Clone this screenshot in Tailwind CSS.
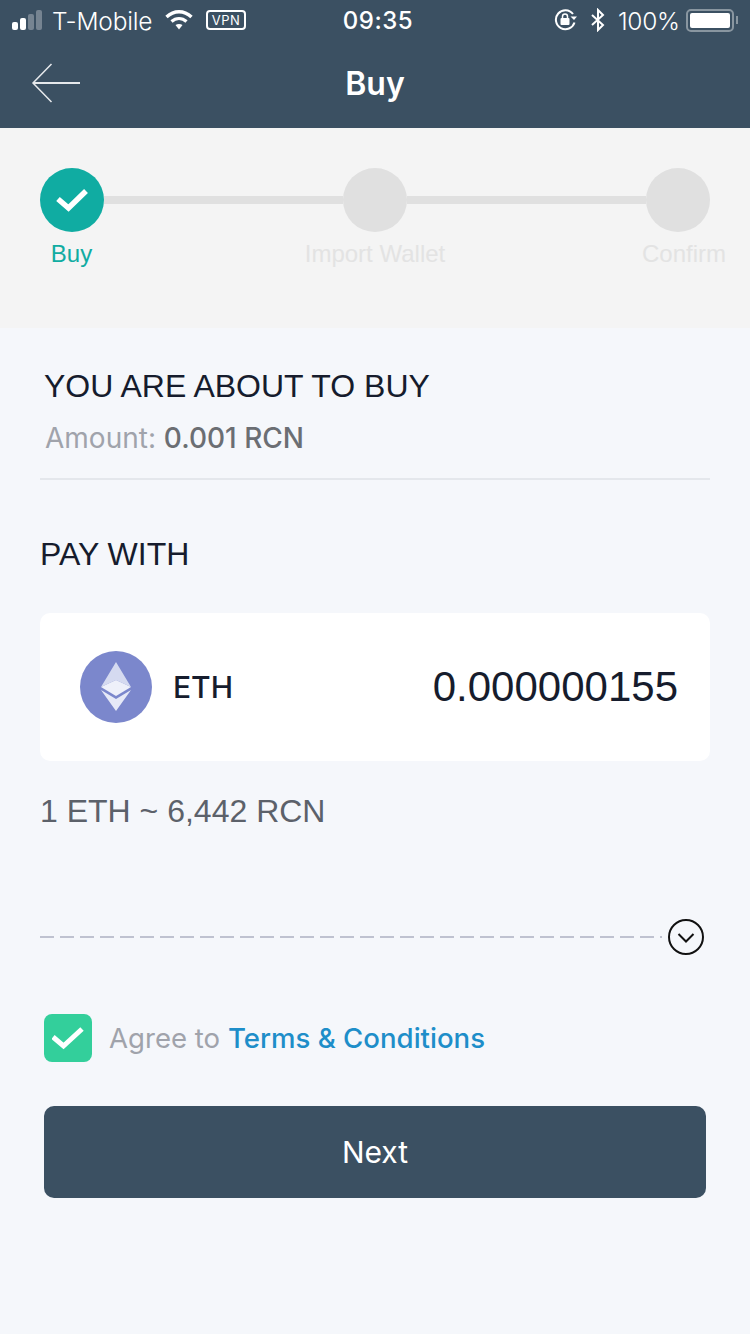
<!DOCTYPE html>
<html lang="en">
<head>
    <meta charset="UTF-8">
    <meta name="viewport" content="width=device-width, initial-scale=1.0">
    <title>Buy</title>
    <script src="https://cdn.jsdelivr.net/npm/@tailwindcss/browser@4"></script>
</head>
<body class="bg-[#f5f7fb] font-['Inter',sans-serif] w-[750px] h-[1334px] overflow-hidden">

    <header class="bg-[#3b5062] h-[128px] text-white">
        <div class="h-[40px] flex items-center pl-[12px] pr-[12px] text-[24.5px] leading-[40px]">
            <div class="flex-1 flex items-center">
                <div class="flex items-end gap-[2px] h-[20px] w-[34px]">
                    <span class="w-[6px] h-[8px] rounded-[2px] bg-white"></span>
                    <span class="w-[6px] h-[12px] rounded-[2px] bg-white"></span>
                    <span class="w-[6px] h-[16px] rounded-[2px] bg-white/30"></span>
                    <span class="w-[6px] h-[20px] rounded-[2px] bg-white/30"></span>
                </div>
                <span class="ml-[6px] w-[113px] pt-[2px] font-light tracking-[-0.2px]">T-Mobile</span>
                <svg class="w-[28px] h-[20px]" viewBox="0 0 28 20" fill="none" stroke="white">
                    <path d="M1.5 7 C9 0 19 0 26.5 7" stroke-width="3.4"/>
                    <path d="M6.5 11.500 C11 7.500 17 7.500 21.500 11.500" stroke-width="3.2"/>
                    <path d="M10.500 15 L14 19.500 L17.500 15 C15.500 13.500 12.500 13.500 10.500 15 Z" fill="white" stroke="none"/>
                </svg>
                <span class="ml-[13px] w-[40px] h-[20px] border-2 border-white rounded-[4px] text-[13px] leading-[16px] text-center tracking-[0.5px]">VPN</span>
            </div>
            <span class="ml-[6px] pt-[2px] text-[24px] font-medium tracking-[0.5px]">09:35</span>
            <div class="flex-1 flex items-center justify-end">
                <svg class="w-[24px] h-[22px]" viewBox="0 0 24 22" fill="none" stroke="white" stroke-width="2">
                    <path d="M20.500 13.500 A9.500 9.500 0 1 1 19 5"/>
                    <path d="M16.500 7.500 L23 7.500 L20 11 Z" fill="white" stroke="none"/>
                    <rect x="6.500" y="9" width="9" height="7" rx="1" fill="white" stroke="none"/>
                    <path d="M8.500 9 V7.500 a2.500 2.500 0 0 1 5 0 V9" stroke-width="1.500"/>
                </svg>
                <svg class="ml-[12px] w-[16px] h-[24px]" viewBox="0 0 16 24" fill="none" stroke="white" stroke-width="2">
                    <path d="M2 7 L13 17 L8 22 V2 L13 7 L2 17"/>
                </svg>
                <span class="ml-[12px] w-[62px] pt-[2px] font-light tracking-[-0.3px]">100%</span>
                <div class="ml-[6px] w-[48px] h-[23px] border-2 border-white/40 rounded-[5px] p-[2px]">
                    <div class="w-full h-full bg-white rounded-[2px]"></div>
                </div>
                <div class="ml-[2px] w-[2px] h-[8px] bg-white/40"></div>
            </div>
        </div>
        <div class="relative h-[88px] flex items-center justify-center">
            <svg class="absolute left-[31px] top-[23px] w-[50px] h-[40px]" viewBox="0 0 50 40" fill="none" stroke="#e6e9ec" stroke-width="1.500">
                <path d="M20.500 1 L2 20 L20.500 39"/>
                <path d="M2 20 H49" stroke-width="2"/>
            </svg>
            <h1 class="text-[32px] leading-[40px] font-semibold">Buy</h1>
        </div>
    </header>

    <section class="bg-[#f4f4f4] h-[200px] pt-[40px]">
        <div class="flex items-center pl-[40px] pr-[40px]">
            <div class="w-[64px] h-[64px] rounded-full bg-[#10aca2] flex items-center justify-center">
                <svg class="w-[32px] h-[24px]" viewBox="0 0 32 24" fill="none" stroke="white" stroke-width="5.500">
                    <path d="M2 11 L12.500 20 L30 3"/>
                </svg>
            </div>
            <div class="flex-1 h-[8px] bg-[#e0e0e0]"></div>
            <div class="w-[64px] h-[64px] rounded-full bg-[#e0e0e0]"></div>
            <div class="flex-1 h-[8px] bg-[#e0e0e0]"></div>
            <div class="w-[64px] h-[64px] rounded-full bg-[#e0e0e0]"></div>
        </div>
        <div class="flex mt-[7px] text-[24px] leading-[30px] font-['Liberation_Sans',sans-serif] text-[#e3e3e3]">
            <span class="w-[143px] text-center text-[#10aca2]">Buy</span>
            <span class="w-[464px] text-center">Import Wallet</span>
            <span class="w-[119px] text-right">Confirm</span>
        </div>
    </section>

    <main class="px-[40px]">
        <section class="h-[152px] border-b-2 border-[#e4e7ec] pt-[38px]">
            <h2 class="ml-[4px] text-[32px] leading-[40px] text-[#161c2d] font-['Liberation_Sans',sans-serif]">YOU ARE ABOUT TO BUY</h2>
            <p class="ml-[5px] mt-[14px] text-[28px] leading-[36px] text-[#a0a3ab]">Amount: <span class="font-medium text-[#6b6e73]">0.001 RCN</span></p>
        </section>

        <h2 class="mt-[54px] text-[32px] leading-[40px] text-[#161c2d] font-['Liberation_Sans',sans-serif]">PAY WITH</h2>

        <div class="mt-[39px] h-[148px] bg-white rounded-[10px] flex items-center pl-[40px] pr-[32px]">
            <svg class="w-[72px] h-[72px]" viewBox="0 0 72 72">
                <circle cx="36" cy="36" r="36" fill="#7b87cc"/>
                <path d="M36 11 L51 36 L36 29 L21 36 Z" fill="#d5daf0"/>
                <path d="M36 29 L51 36 L36 45 L21 36 Z" fill="#eef0fa"/>
                <path d="M21 39 L36 48 L51 39 L36 60 Z" fill="#e6e9f7"/>
            </svg>
            <span class="ml-[21px] text-[30px] font-medium text-[#161c2d]">ETH</span>
            <span class="ml-auto pb-[2px] text-[42px] text-[#161c2d] font-['Liberation_Sans',sans-serif]">0.000000155</span>
        </div>

        <p class="mt-[30px] text-[32px] leading-[40px] text-[#5c616a] font-['Liberation_Sans',sans-serif]">1 ETH ~ 6,442 RCN</p>

        <div class="mt-[88px] flex items-center">
            <svg class="w-[622px] h-[2px]" viewBox="0 0 622 2">
                <line x1="0" y1="1" x2="622" y2="1" stroke="#bfc2d0" stroke-width="2" stroke-dasharray="14 6"/>
            </svg>
            <svg class="ml-[6px] w-[36px] h-[36px]" viewBox="0 0 36 36" fill="none" stroke="#111" stroke-width="2">
                <circle cx="18" cy="18" r="17"/>
                <path d="M10.500 15 L18 22.500 L25.500 15"/>
            </svg>
        </div>

        <div class="mt-[59px] ml-[4px] flex items-center">
            <div class="w-[48px] h-[48px] rounded-[8px] bg-[#33cf9b] flex items-center justify-center">
                <svg class="w-[32px] h-[24px]" viewBox="0 0 32 24" fill="none" stroke="white" stroke-width="5">
                    <path d="M1 11 L11.500 20 L30 3"/>
                </svg>
            </div>
            <p class="ml-[17px] text-[27.6px] leading-[40px] text-[#a0a3ab]">Agree to <span class="font-medium text-[#1e8ec9]">Terms &amp; Conditions</span></p>
        </div>

        <button class="mt-[44px] ml-[4px] w-[662px] h-[92px] rounded-[10px] bg-[#3b5062] text-white text-[30px]">Next</button>
    </main>

</body>
</html>
